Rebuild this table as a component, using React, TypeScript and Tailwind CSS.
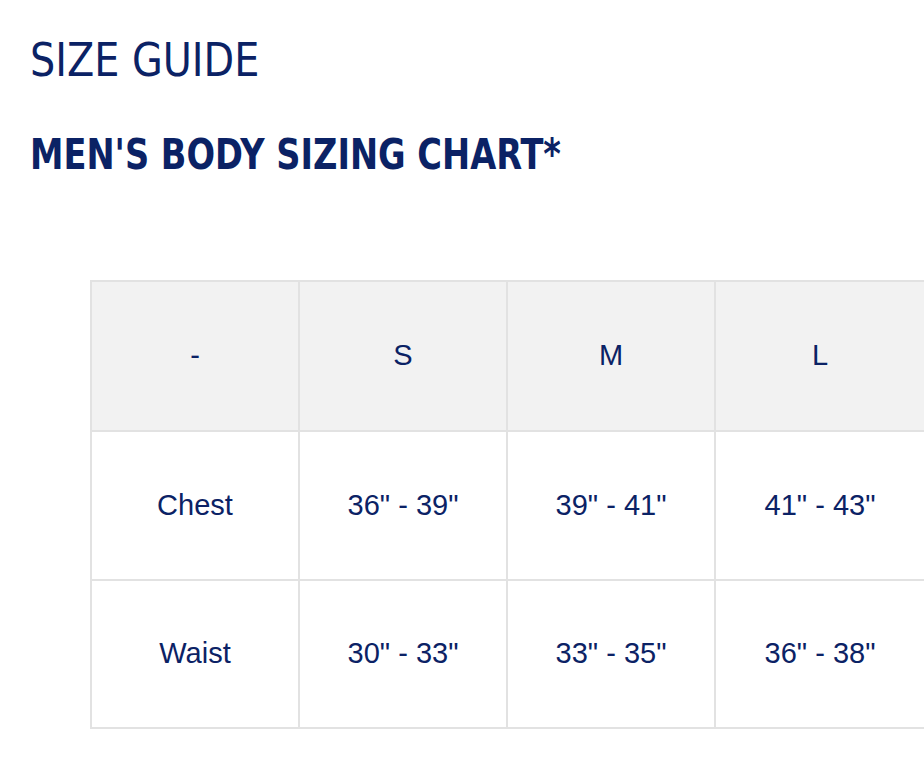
import * as React from 'react';

const sizes = ['S', 'M', 'L'];

const rows = [
  { label: 'Chest', values: ['36" - 39"', '39" - 41"', '41" - 43"'] },
  { label: 'Waist', values: ['30" - 33"', '33" - 35"', '36" - 38"'] },
];

const cell = 'border-2 border-[#e2e2e2] font-normal text-center align-middle';

export default function App() {
  return (
    <div className="w-[924px] h-[762px] overflow-hidden bg-white text-[#0b2265]">
      <div className="pl-[30px] pt-[32px] font-['DejaVu_Sans_Condensed',sans-serif]">
        <h1 className="text-[47px] leading-[56px] font-normal">
          <span className="inline-block origin-left scale-x-[0.94]">SIZE GUIDE</span>
        </h1>
        <h2 className="mt-[42px] text-[42px] leading-[50px] font-bold">
          <span className="inline-block origin-left scale-x-[0.89]">MEN'S BODY SIZING CHART*</span>
        </h2>
      </div>
      <div className="ml-[90px] mt-[100px]">
        {/* the chart runs on past the right edge of the window */}
        <table className="w-[840px] border-collapse table-fixed font-['Liberation_Sans',Arial,sans-serif] text-[29px]">
          <colgroup>
            <col className="w-[208px]" />
            <col className="w-[208px]" />
            <col className="w-[208px]" />
            <col className="w-[216px]" />
          </colgroup>
          <thead>
            <tr className="bg-[#f2f2f2]">
              <th className={`${cell} h-[150px]`}>-</th>
              {sizes.map((s) => (
                <th key={s} className={`${cell} h-[150px]`}>
                  <span className={s === 'L' ? 'pr-[6px]' : ''}>{s}</span>
                </th>
              ))}
            </tr>
          </thead>
          <tbody>
            {rows.map((r, ri) => (
              <tr key={r.label}>
                <td className={`${cell} ${ri === 0 ? 'h-[149px]' : 'h-[148px]'}`}>{r.label}</td>
                {r.values.map((v, i) => (
                  <td key={i} className={`${cell} ${ri === 0 ? 'h-[149px]' : 'h-[148px]'}`}>
                    <span className={i === 2 ? 'pr-[6px]' : ''}>{v}</span>
                  </td>
                ))}
              </tr>
            ))}
          </tbody>
        </table>
      </div>
    </div>
  );
}
